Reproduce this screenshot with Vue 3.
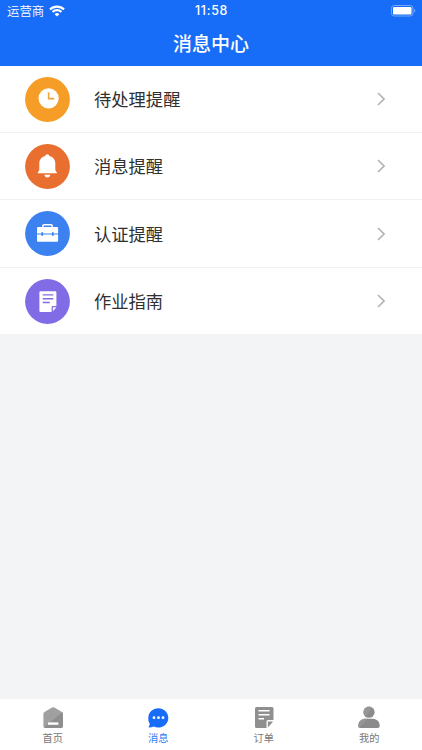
<script setup>
const rows = [
  { id: 'clock', label: '待处理提醒', color: '#f59d26' },
  { id: 'bell', label: '消息提醒', color: '#e86f30' },
  { id: 'case', label: '认证提醒', color: '#3b82f0' },
  { id: 'guide', label: '作业指南', color: '#826ce5' },
]
const tabs = [
  { id: 'home', label: '首页' },
  { id: 'message', label: '消息', active: true },
  { id: 'order', label: '订单' },
  { id: 'mine', label: '我的' },
]
</script>

<template>
  <div class="screen">
    <header class="header">
      <div class="status">
        <div class="carrier">
          <span class="carrier-name">运营商</span>
          <svg class="wifi" viewBox="0 0 16 12">
            <path d="M8 11.6 5.6 9.2a3.4 3.4 0 0 1 4.8 0z" fill="#fff" />
            <path d="M3.6 7a6.3 6.3 0 0 1 8.8 0M1 4.4a10 10 0 0 1 14 0" fill="none" stroke="#fff" stroke-width="2.2" />
          </svg>
        </div>
        <span class="time">11:58</span>
        <div class="power">
          <svg class="battery" viewBox="0 0 25 12">
            <rect x=".5" y=".5" width="21.5" height="10.5" rx="2.8" fill="none" stroke="#74a9fc" />
            <rect x="2" y="2" width="18.5" height="7.5" rx="1.3" fill="#fff" />
            <path d="M23.2 4v3.6q1.2-.5 1.2-1.8T23.2 4z" fill="#74a9fc" />
          </svg>
        </div>
      </div>
      <h1 class="title">消息中心</h1>
    </header>

    <main class="list">
      <div v-for="row in rows" :key="row.id" class="row">
        <svg class="badge" viewBox="0 0 45 45">
          <circle cx="22.5" cy="22.5" r="22.4" :fill="row.color" />
          <g v-if="row.id === 'clock'">
            <circle cx="23.6" cy="21.3" r="10.1" fill="#fff" />
            <path d="M23.6 15.3v6.3h5.6" fill="none" stroke="#f2a43c" stroke-width="1.6" />
          </g>
          <g v-else-if="row.id === 'bell'" fill="#fff">
            <path d="M20.1 11.9a2.3 2.3 0 0 1 4.4 0c3.7 1 5.800 3.700 5.800 7.300v5.200c0 2 .4 2.700 1.300 3.600.6.600.5 1.300-.4 1.300H13.400c-.9 0-1-.7-.4-1.300.9-.9 1.300-1.600 1.300-3.600v-5.200c0-3.600 2.100-6.300 5.800-7.300z" />
            <path d="M19.200 30.700h6.300q-.8 2.800-3.100 2.800t-3.200-2.800z" />
          </g>
          <g v-else-if="row.id === 'case'">
            <path d="M17.800 16.800v-1.700q0-1.300 1.300-1.300h6.800q1.300 0 1.300 1.300v1.700" fill="none" stroke="#fff" stroke-width="1.5" />
            <path d="M13 16h19.100q1 0 1 1v5.500h-4.400v-1.200h-1.800v1.200h-8.800v-1.200h-1.800v1.200H12V17q0-1 1-1z" fill="#fff" />
            <path d="M12 23.600h4.300v1.200h1.800v-1.200h8.800v1.200h1.800v-1.200h4.400v6.200q0 1-1 1H13q-1 0-1-1z" fill="#fff" />
          </g>
          <g v-else>
            <path d="M15.500 12.200h14.800q1.100 0 1.100 1.100V27h-3.500q-1.300 0-1.300 1.300v4.800H15.500q-1.100 0-1.100-1.100V13.300q0-1.100 1.100-1.100z" fill="#fff" />
            <path d="M27.900 28.300h3.500l-3.500 4z" fill="#fff" />
            <path d="M17.700 15.900h10.600M17.700 19.700h10.600M17.700 23.500h7.100" fill="none" stroke="#826ce5" stroke-width="1.4" />
          </g>
        </svg>
        <span class="label">{{ row.label }}</span>
        <svg class="arrow" viewBox="0 0 8 14">
          <path d="m1 1 6 6-6 6" fill="none" stroke="#b3b3b3" stroke-width="1.6" />
        </svg>
      </div>
    </main>

    <nav class="tabs">
      <div v-for="tab in tabs" :key="tab.id" class="tab" :class="{ active: tab.active }">
        <svg class="tab-icon" viewBox="0 0 24 24">
          <g v-if="tab.id === 'home'">
            <path d="M11 1.500q1.200-.7 2.400 0l7.500 4.600q1.100.7 1.100 1.900v11.900q0 2-2 2H4.400q-2 0-2-2V8q0-1.200 1.100-1.900z" fill="#a0a0a0" />
            <path d="M21.200 6.300q.8.700.8 1.700v11.900q0 2-2 2H4.400q-.8 0-1.300-.5z" fill="#8e8e8e" />
            <path d="M7 16.400h10.400v2.400H7z" fill="#fff" />
          </g>
          <g v-else-if="tab.id === 'message'">
            <path d="M12.300 2.300c5.600 0 10 4.300 10 9.600s-4.400 9.600-10 9.600c-1.700 0-3.200-.4-4.600-1.100-1.500.8-3 1.100-4.600 1.100-.6 0-.7-.5-.3-.9.7-.8.9-1.800.9-2.800a9.400 9.400 0 0 1-1.400-5.900c0-5.300 4.400-9.600 10-9.600z" fill="#176df7" />
            <g fill="#fff"><circle cx="8" cy="11.700" r="1.400" /><circle cx="12.500" cy="11.700" r="1.400" /><circle cx="17" cy="11.700" r="1.400" /></g>
          </g>
          <g v-else-if="tab.id === 'order'">
            <path d="M4.500.9H20q1.500 0 1.500 1.500V14h-5.300q-1.700 0-1.700 1.700v6.200h-10q-1.500 0-1.500-1.500v-18Q3 .9 4.500.9z" fill="#8f8f8f" />
            <path d="M15.900 15.600h5.200l-5.200 5.900z" fill="#8f8f8f" />
            <path d="M6.500 4.700h11M6.500 8.700h11M6.500 12.700h5.500" fill="none" stroke="#fff" stroke-width="1.600" />
          </g>
          <g v-else fill="#8b8b8b">
            <circle cx="12" cy="6.200" r="5.600" />
            <path d="M1.300 19.900c0-4.700 3.500-7.200 7.500-7.200h6.400c4 0 7.500 2.500 7.500 7.200q0 2-2 2H3.300q-2 0-2-2z" />
            <path d="M8.700 10.700a5.600 5.600 0 0 1 6.200-9.300zM10.500 12.700H8.800c-4 0-7.500 2.500-7.500 7.200q0 1.500 1 1.900z" fill="#969696" />
          </g>
        </svg>
        <span>{{ tab.label }}</span>
      </div>
    </nav>
  </div>
</template>

<style>
body { margin: 0; }
</style>

<style scoped>
.screen {
  display: flex;
  flex-direction: column;
  width: 422px;
  height: 750px;
  overflow: hidden;
  background: #f3f4f6;
  font-family: "Noto Sans CJK SC", sans-serif;
}
.header {
  flex: none;
  height: 65.6px;
  background: #176df7;
  color: #fff;
}
.status {
  display: grid;
  grid-template-columns: 1fr auto 1fr;
  align-items: center;
  height: 21px;
  padding: 0 6px 0 7px;
}
.carrier {
  display: flex;
  align-items: center;
  gap: 5px;
  font-size: 12.4px;
  line-height: 21px;
  font-weight: 350;
}
.carrier-name { padding-top: 2px; line-height: 19px; }
.wifi { width: 16px; height: 12px; }
.time {
  font-family: Inter, sans-serif;
  font-size: 12.4px;
  line-height: 21px;
  font-weight: 500;
  letter-spacing: .7px;
}
.power { display: flex; justify-content: flex-end; }
.battery { width: 25px; height: 12px; }
.title {
  margin: 0;
  font-size: 19px;
  line-height: 43px;
  font-weight: 500;
  text-align: center;
}
.list { flex: none; background: #fff; }
.row {
  display: flex;
  align-items: center;
  box-sizing: border-box;
  height: 67.4px;
  padding: .6px 37.5px 0 24.5px;
  border-bottom: 1px solid #f2f2f3;
}
.row:last-child { height: 66.6px; border-bottom: 0; }
.badge { width: 45px; height: 45px; flex: none; }
.label {
  flex: 1;
  margin-left: 24.5px;
  color: #303030;
  font-size: 17.3px;
  line-height: 26px;
}
.row:last-child .label { padding-bottom: 1px; }
.arrow { width: 8px; height: 14px; }
.tabs {
  display: grid;
  grid-template-columns: repeat(4, 1fr);
  flex: none;
  height: 51px;
  margin-top: auto;
  background: #fff;
}
.tab {
  display: flex;
  flex-direction: column;
  align-items: center;
  padding-top: 7px;
  color: #777;
  font-size: 10.2px;
  line-height: 15px;
}
.tab.active { color: #2e7cf6; }
.tab-icon { width: 24px; height: 24px; }
</style>
